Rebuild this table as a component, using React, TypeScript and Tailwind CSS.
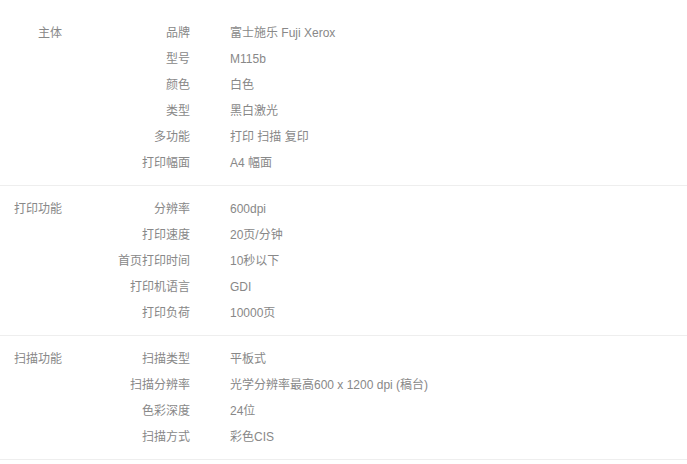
const sections: { title: string; rows: [string, string][] }[] = [
  {
    title: '主体',
    rows: [
      ['品牌', '富士施乐 Fuji Xerox'],
      ['型号', 'M115b'],
      ['颜色', '白色'],
      ['类型', '黑白激光'],
      ['多功能', '打印 扫描 复印'],
      ['打印幅面', 'A4 幅面'],
    ],
  },
  {
    title: '打印功能',
    rows: [
      ['分辨率', '600dpi'],
      ['打印速度', '20页/分钟'],
      ['首页打印时间', '10秒以下'],
      ['打印机语言', 'GDI'],
      ['打印负荷', '10000页'],
    ],
  },
  {
    title: '扫描功能',
    rows: [
      ['扫描类型', '平板式'],
      ['扫描分辨率', '光学分辨率最高600 x 1200 dpi (稿台)'],
      ['色彩深度', '24位'],
      ['扫描方式', '彩色CIS'],
    ],
  },
]

export default function App() {
  return (
    <div
      className="min-h-screen bg-white pt-[10px] text-[12px] text-[#888]"
      style={{ fontFamily: '"Liberation Sans", Tahoma, "Noto Sans CJK SC", sans-serif' }}
    >
      {sections.map((s) => (
        <div key={s.title} className="flex border-b border-[#eee] pt-[10px] pb-[9px]">
          <div className="w-[62px] shrink-0 text-right leading-[26px]">{s.title}</div>
          <div className="flex-1">
            {s.rows.map(([k, v]) => (
              <div key={k} className="flex h-[26px] items-center">
                <div className="w-[128px] shrink-0 text-right">{k}</div>
                <div className="pl-[40px]">{v}</div>
              </div>
            ))}
          </div>
        </div>
      ))}
    </div>
  )
}
